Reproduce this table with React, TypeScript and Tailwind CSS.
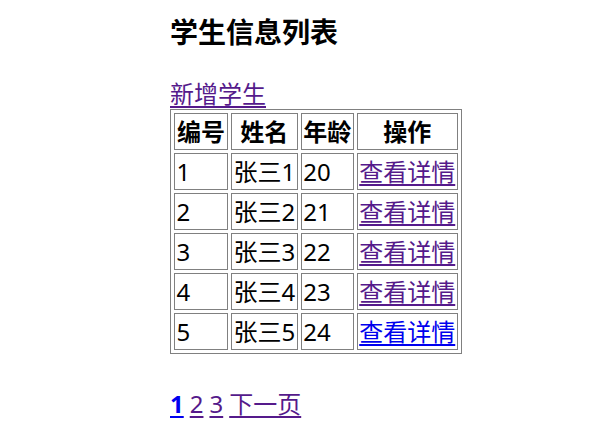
import React from "react";

interface Student {
  id: number;
  name: string;
  age: number;
  visited: boolean;
}

const students: Student[] = [
  { id: 1, name: "张三1", age: 20, visited: true },
  { id: 2, name: "张三2", age: 21, visited: true },
  { id: 3, name: "张三3", age: 22, visited: true },
  { id: 4, name: "张三4", age: 23, visited: true },
  { id: 5, name: "张三5", age: 24, visited: false },
];

const font = {
  fontFamily: '"Noto Sans", "Noto Sans CJK SC", sans-serif',
};

const cell =
  "whitespace-nowrap border-[1.5px] border-[#808080] px-[1.5px] py-[1.5px] leading-[32px] align-middle";

export default function App() {
  return (
    <div
      className="min-h-[439px] w-[597px] bg-white pl-[170px] pt-[14px] text-[24px] text-black"
      style={font}
    >
      <h3 className="text-[28px] font-bold leading-[36px]">学生信息列表</h3>

      <a
        href="#"
        className="mt-[29px] block w-fit leading-[30px] text-[#551a8b] underline underline-offset-[3px]"
      >
        新增学生
      </a>

      <table className="border-separate border-spacing-[3px] border-[1.5px] border-[#808080]">
        <thead>
          <tr>
            <th className={`${cell} min-w-[54px] text-center font-bold`}>编号</th>
            <th className={`${cell} min-w-[66px] text-center font-bold`}>姓名</th>
            <th className={`${cell} min-w-[53px] text-center font-bold`}>年龄</th>
            <th className={`${cell} min-w-[101px] text-center font-bold`}>操作</th>
          </tr>
        </thead>
        <tbody>
          {students.map((s) => (
            <tr key={s.id}>
              <td className={cell}>{s.id}</td>
              <td className={cell}>{s.name}</td>
              <td className={cell}>{s.age}</td>
              <td className={cell}>
                <a
                  href="#"
                  className={`underline underline-offset-[3px] ${
                    s.visited ? "text-[#551a8b]" : "text-[#0000ee]"
                  }`}
                >
                  查看详情
                </a>
              </td>
            </tr>
          ))}
        </tbody>
      </table>

      <div className="mt-[34px] flex gap-[6px] leading-[32px]">
        <a href="#" className="font-bold text-[#0000ee] underline underline-offset-[3px]">
          1
        </a>
        <a href="#" className="text-[#551a8b] underline underline-offset-[3px]">
          2
        </a>
        <a href="#" className="text-[#551a8b] underline underline-offset-[3px]">
          3
        </a>
        <a href="#" className="text-[#551a8b] underline underline-offset-[3px]">
          下一页
        </a>
      </div>
    </div>
  );
}
